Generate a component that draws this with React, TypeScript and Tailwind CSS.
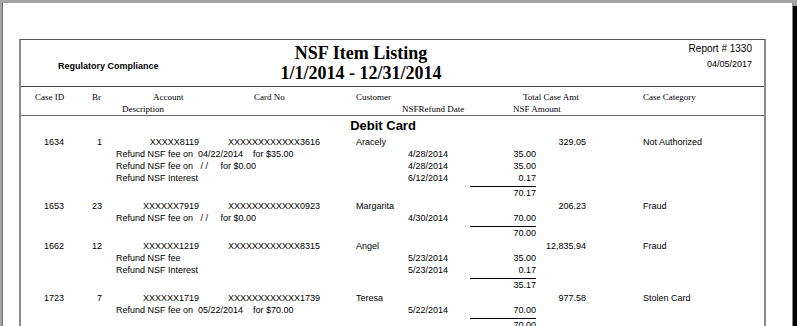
const rows = [
  {
    id: "1634",
    br: "1",
    account: "XXXXX8119",
    card: "XXXXXXXXXXXX3616",
    customer: "Aracely",
    total: "329.05",
    category: "Not Authorized",
    items: [
      { desc: "Refund NSF fee on  04/22/2014    for $35.00", date: "4/28/2014", amt: "35.00" },
      { desc: "Refund NSF fee on   / /     for $0.00", date: "4/28/2014", amt: "35.00" },
      { desc: "Refund NSF Interest", date: "6/12/2014", amt: "0.17" },
    ],
    sum: "70.17",
  },
  {
    id: "1653",
    br: "23",
    account: "XXXXXX7919",
    card: "XXXXXXXXXXXX0923",
    customer: "Margarita",
    total: "206.23",
    category: "Fraud",
    items: [{ desc: "Refund NSF fee on   / /     for $0.00", date: "4/30/2014", amt: "70.00" }],
    sum: "70.00",
  },
  {
    id: "1662",
    br: "12",
    account: "XXXXXX1219",
    card: "XXXXXXXXXXXX8315",
    customer: "Angel",
    total: "12,835.94",
    category: "Fraud",
    items: [
      { desc: "Refund NSF fee", date: "5/23/2014", amt: "35.00" },
      { desc: "Refund NSF Interest", date: "5/23/2014", amt: "0.17" },
    ],
    sum: "35.17",
  },
  {
    id: "1723",
    br: "7",
    account: "XXXXXX1719",
    card: "XXXXXXXXXXXX1739",
    customer: "Teresa",
    total: "977.58",
    category: "Stolen Card",
    items: [{ desc: "Refund NSF fee on  05/22/2014    for $70.00", date: "5/22/2014", amt: "70.00" }],
    sum: "70.00",
  },
];

export default function App() {
  return (
    <div className="flex h-[326px] w-[797px] overflow-hidden bg-[#a3a3a3] pl-[2px] pt-[3px]">
      {/* page */}
      <div className="h-[400px] w-[791px] shrink-0 border-l border-r border-l-[#6b6b6b] border-r-[#8a8a8a] bg-white pl-[16px] pt-[36px]">
        <div className="w-[747px] border-x-2 border-t border-x-[#8a8a8a] border-t-[#555] text-black">
          {/* report header */}
          <div className="flex h-[47px] border-b border-[#444]">
            <div className="w-[240px] pl-[37px] pt-[21px] font-['Liberation_Sans',Arial,sans-serif] text-[9px] font-bold leading-[11px]">
              Regulatory Compliance
            </div>
            <div className="w-[200px] pt-[3px] text-center font-['Liberation_Serif','Times_New_Roman',serif] text-[18px] font-bold leading-[20px]">
              <div>NSF Item Listing</div>
              <div>1/1/2014 - 12/31/2014</div>
            </div>
            <div className="flex-1 pr-[12px] pt-[3px] text-right font-['Liberation_Sans',Arial,sans-serif]">
              <div className="text-[10px] leading-[12px]">Report # 1330</div>
              <div className="mt-[4px] text-[9px] leading-[11px]">04/05/2017</div>
            </div>
          </div>

          {/* column headers */}
          <div className="border-b border-[#666] pt-[4px] font-['Liberation_Serif','Times_New_Roman',serif] text-[9px] leading-[12px]">
            <div className="flex pl-[14px]">
              <span className="w-[57px]">Case ID</span>
              <span className="w-[61px]">Br</span>
              <span className="w-[101px]">Account</span>
              <span className="w-[102px]">Card No</span>
              <span className="w-[167px]">Customer</span>
              <span className="w-[120px]">Total Case Amt</span>
              <span>Case Category</span>
            </div>
            <div className="flex pl-[101px]">
              <span className="w-[280px]">Description</span>
              <span className="w-[111px]">NSFRefund Date</span>
              <span>NSF Amount</span>
            </div>
          </div>

          {/* section */}
          <div className="w-[724px] pt-[2px] text-center font-['Liberation_Sans',Arial,sans-serif] text-[13px] font-bold leading-[15px]">
            Debit Card
          </div>

          <div className="mt-[3px] font-['Liberation_Sans',Arial,sans-serif] text-[9px] leading-[12px] text-black">
            {rows.map((r) => (
              <div key={r.id}>
                <div className="flex pl-[23px]">
                  <span className="w-[40px]">{r.id}</span>
                  <span className="w-[18px] text-right">{r.br}</span>
                  <span className="w-[97px] text-right">{r.account}</span>
                  <span className="ml-[29px] w-[128px]">{r.card}</span>
                  <span className="w-[130px]">{r.customer}</span>
                  <span className="w-[100px] text-right">{r.total}</span>
                  <span className="ml-[57px]">{r.category}</span>
                </div>
                {r.items.map((it, i) => (
                  <div key={i} className="flex pl-[95px]">
                    <span className="w-[292px] whitespace-pre">{it.desc}</span>
                    <span className="w-[68px]">{it.date}</span>
                    <span className="w-[60px] text-right">{it.amt}</span>
                  </div>
                ))}
                <div className="ml-[449px] mt-[2px] w-[66px] border-t border-black pb-[1px] text-right leading-[12px]">{r.sum}</div>
              </div>
            ))}
          </div>
        </div>
      </div>
      <div className="mt-[3px] w-[4px] shrink-0 bg-black" />
    </div>
  );
}
